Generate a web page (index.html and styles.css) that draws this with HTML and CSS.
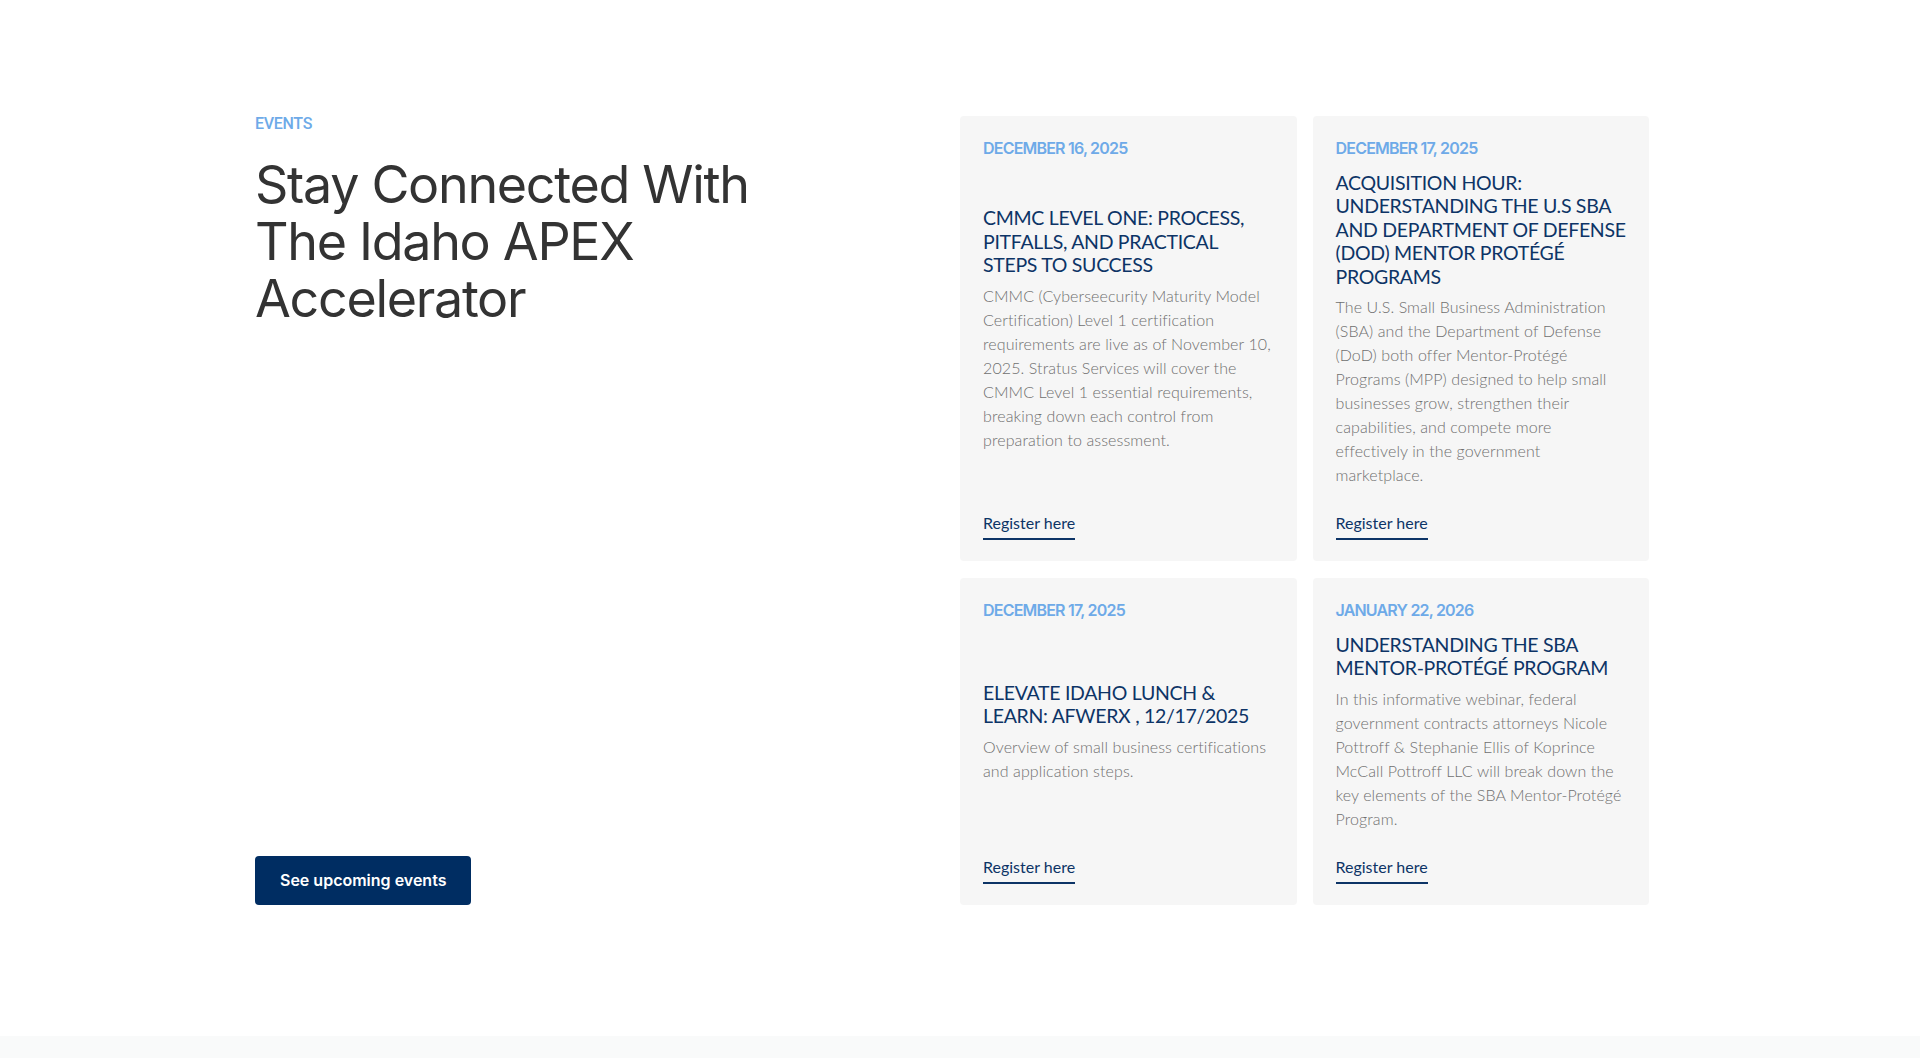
FILE: index.html
```html
<!DOCTYPE html>
<html lang="en">

<head>
	<meta charset="UTF-8">
	<meta name="viewport" content="width=device-width, initial-scale=1.0">
	<title>Events</title>
	<link rel="stylesheet" href="styles.css">
</head>

<body>

	<section class="events">
		<div class="events__intro">
			<div>
				<div class="events__label">EVENTS</div>
				<h2 class="events__title">Stay Connected With The Idaho APEX Accelerator</h2>
			</div>
			<a class="events__btn" href="#">See upcoming events</a>
		</div>

		<div class="events__grid">
			<div class="card">
				<div class="card__date">DECEMBER 16, 2025</div>
				<div class="card__body">
					<h3 class="card__title">CMMC LEVEL ONE: PROCESS, PITFALLS, AND PRACTICAL STEPS TO SUCCESS</h3>
					<p class="card__text">CMMC (Cyberseecurity Maturity Model Certification) Level 1 certification requirements are live as of November 10, 2025. Stratus Services will cover the CMMC Level 1 essential requirements, breaking down each control from preparation to assessment.</p>
				</div>
				<div class="card__foot"><a class="card__link" href="#">Register here</a></div>
			</div>

			<div class="card">
				<div class="card__date">DECEMBER 17, 2025</div>
				<div class="card__body">
					<h3 class="card__title">ACQUISITION HOUR: UNDERSTANDING THE U.S SBA AND DEPARTMENT OF DEFENSE (DOD) MENTOR PROTÉGÉ PROGRAMS</h3>
					<p class="card__text">The U.S. Small Business Administration (SBA) and the Department of Defense (DoD) both offer Mentor-Protégé Programs (MPP) designed to help small businesses grow, strengthen their capabilities, and compete more effectively in the government marketplace.</p>
				</div>
				<div class="card__foot"><a class="card__link" href="#">Register here</a></div>
			</div>

			<div class="card">
				<div class="card__date">DECEMBER 17, 2025</div>
				<div class="card__body">
					<h3 class="card__title">ELEVATE IDAHO LUNCH &amp; LEARN: AFWERX , 12/17/2025</h3>
					<p class="card__text">Overview of small business certifications and application steps.</p>
				</div>
				<div class="card__foot"><a class="card__link" href="#">Register here</a></div>
			</div>

			<div class="card">
				<div class="card__date">JANUARY 22, 2026</div>
				<div class="card__body">
					<h3 class="card__title">UNDERSTANDING THE SBA MENTOR-PROTÉGÉ PROGRAM</h3>
					<p class="card__text">In this informative webinar, federal government contracts attorneys Nicole Pottroff &amp; Stephanie Ellis of Koprince McCall Pottroff LLC will break down the key elements of the SBA Mentor-Protégé Program.</p>
				</div>
				<div class="card__foot"><a class="card__link" href="#">Register here</a></div>
			</div>
		</div>
	</section>

	<div class="strip"></div>

</body>

</html>
```

FILE: styles.css
```css
body {
	margin: 0;
	background: #fff;
	font-family: Lato, "Noto Sans", sans-serif;
}

.events {
	display: flex;
	justify-content: space-between;
	padding: 116px 271px 131px 255px;
}

.events__intro {
	width: 560px;
	display: flex;
	flex-direction: column;
	justify-content: space-between;
	align-items: flex-start;
}

.events__label {
	font-family: Roboto, sans-serif;
	font-weight: 500;
	font-size: 16px;
	line-height: 15px;
	letter-spacing: -0.3px;
	color: #6eaae8;
}

.events__title {
	margin: 25px 0 0;
	font-family: Inter, sans-serif;
	font-weight: 400;
	font-size: 52px;
	line-height: 57px;
	letter-spacing: -1.3px;
	color: #333;
}

.events__btn {
	display: inline-block;
	padding: 14px 25px;
	border-radius: 4px;
	background: #002d62;
	color: #fff;
	font-family: Inter, sans-serif;
	font-weight: 600;
	font-size: 16px;
	line-height: 21px;
	text-decoration: none;
}

.events__grid {
	width: 689px;
	display: grid;
	grid-template-columns: 1fr 1fr;
	gap: 17px 16px;
}

.card {
	display: flex;
	flex-direction: column;
	padding: 21px 23px 21px;
	border-radius: 4px;
	background: #f6f6f6;
}

.card__date {
	font-family: Inter, sans-serif;
	font-weight: 600;
	font-size: 16px;
	line-height: 22px;
	letter-spacing: -0.8px;
	color: #6eaae8;
}

.card__body {
	flex: 1;
	display: flex;
	flex-direction: column;
	justify-content: center;
	padding: 12px 0 25px;
}

.card__title {
	margin: 0 0 7px;
	font-weight: 400;
	font-size: 19.5px;
	line-height: 23.4px;
	letter-spacing: -0.3px;
	color: #0d3466;
}

.card__text {
	margin: 0;
	font-weight: 300;
	font-size: 16px;
	line-height: 24px;
	letter-spacing: 0.1px;
	color: #6f6f6f;
}

.card__link {
	display: inline-block;
	padding-bottom: 4px;
	border-bottom: 2px solid #0d3466;
	font-size: 16px;
	line-height: 22px;
	color: #0d3466;
	text-decoration: none;
}

.strip {
	height: 40px;
	background: #f9fafa;
}
```
